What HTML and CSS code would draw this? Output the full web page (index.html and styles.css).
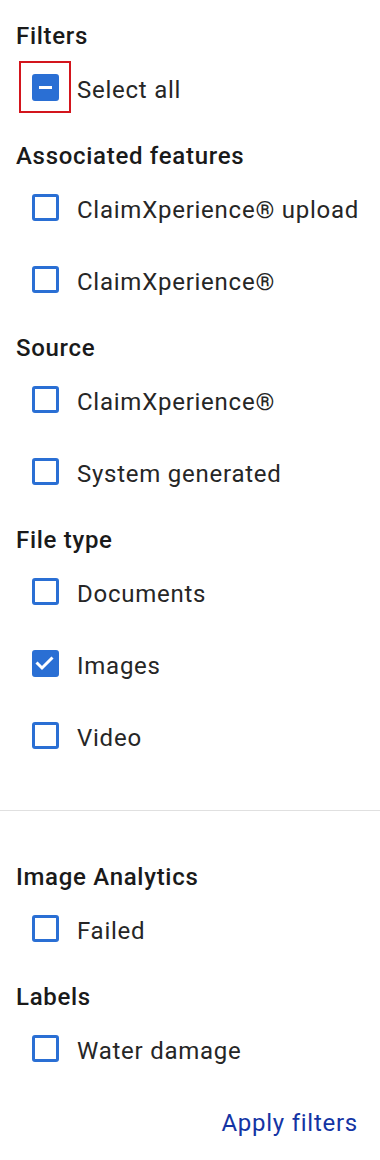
FILE: index.html
```html
<!DOCTYPE html>
<html>
	<head>
		<title>Filters</title>
		<meta name="viewport" content="width=device-width, initial-scale=1.0">
		<link rel="stylesheet" href="styles.css">
	</head>
	<body>
		<div class="panel">
			<div class="group">
				<h2>Filters</h2>
				<div class="options">
					<label class="option">
						<span class="box filled focused">
							<svg viewBox="0 0 27 27" width="27" height="27"><rect x="7" y="12" width="13" height="3" fill="#fff"/></svg>
						</span>
						<span class="text">Select all</span>
					</label>
				</div>
			</div>

			<div class="group">
				<h2>Associated features</h2>
				<div class="options">
					<label class="option"><span class="box"></span><span class="text">ClaimXperience® upload</span></label>
					<label class="option"><span class="box"></span><span class="text">ClaimXperience®</span></label>
				</div>
			</div>

			<div class="group">
				<h2>Source</h2>
				<div class="options">
					<label class="option"><span class="box"></span><span class="text">ClaimXperience®</span></label>
					<label class="option"><span class="box"></span><span class="text">System generated</span></label>
				</div>
			</div>

			<div class="group">
				<h2>File type</h2>
				<div class="options">
					<label class="option"><span class="box"></span><span class="text">Documents</span></label>
					<label class="option">
						<span class="box filled">
							<svg viewBox="0 0 27 27" width="27" height="27"><path d="M4.5 12.5 L10 18 L20.5 7.5" fill="none" stroke="#fff" stroke-width="3"/></svg>
						</span>
						<span class="text">Images</span>
					</label>
					<label class="option"><span class="box"></span><span class="text">Video</span></label>
				</div>
			</div>

			<hr class="divider">

			<div class="group">
				<h2>Image Analytics</h2>
				<div class="options">
					<label class="option"><span class="box"></span><span class="text">Failed</span></label>
				</div>
			</div>

			<div class="group">
				<h2>Labels</h2>
				<div class="options">
					<label class="option"><span class="box"></span><span class="text">Water damage</span></label>
				</div>
			</div>

			<div class="actions">
				<button class="apply">Apply filters</button>
			</div>
		</div>
	</body>
</html>
```

FILE: styles.css
```css
body {
	margin: 0;
	background: #ffffff;
	font-family: Roboto, "Liberation Sans", sans-serif;
}

.panel {
	padding: 22px 16px 0 16px;
}

.group + .group {
	margin-top: 31px;
}

h2 {
	margin: 0 0 13px 0;
	font-size: 24px;
	font-weight: 500;
	line-height: 28px;
	letter-spacing: 0.7px;
	color: #1a1a1a;
}

.options {
	display: flex;
	flex-direction: column;
	gap: 24px;
}

.option {
	display: flex;
	align-items: center;
	height: 48px;
	gap: 18px;
	padding-left: 16px;
}

.box {
	position: relative;
	box-sizing: border-box;
	width: 27px;
	height: 27px;
	border: 3px solid #2a6fd4;
	border-radius: 3px;
	flex-shrink: 0;
}
.box svg {
	display: block;
	margin: -3px;
}
.filled {
	background-color: #2a6fd4;
}
.focused::after {
	content: "";
	position: absolute;
	left: -16px;
	top: -16px;
	width: 48px;
	height: 48px;
	border: 2px solid #d3151d;
}

.text {
	padding-top: 5px;
	font-size: 24px;
	letter-spacing: 0.75px;
	color: #262626;
}

.divider {
	margin: 51px -16px 52px -16px;
	border: none;
	border-top: 1px solid #e0e0e0;
}

.actions {
	display: flex;
	justify-content: flex-end;
	margin-top: 29px;
}
.apply {
	padding: 8px 6px;
	border: none;
	background: none;
	font-family: Roboto, "Liberation Sans", sans-serif;
	font-size: 24px;
	line-height: 28px;
	letter-spacing: 0.75px;
	color: #1434a4;
}
```
